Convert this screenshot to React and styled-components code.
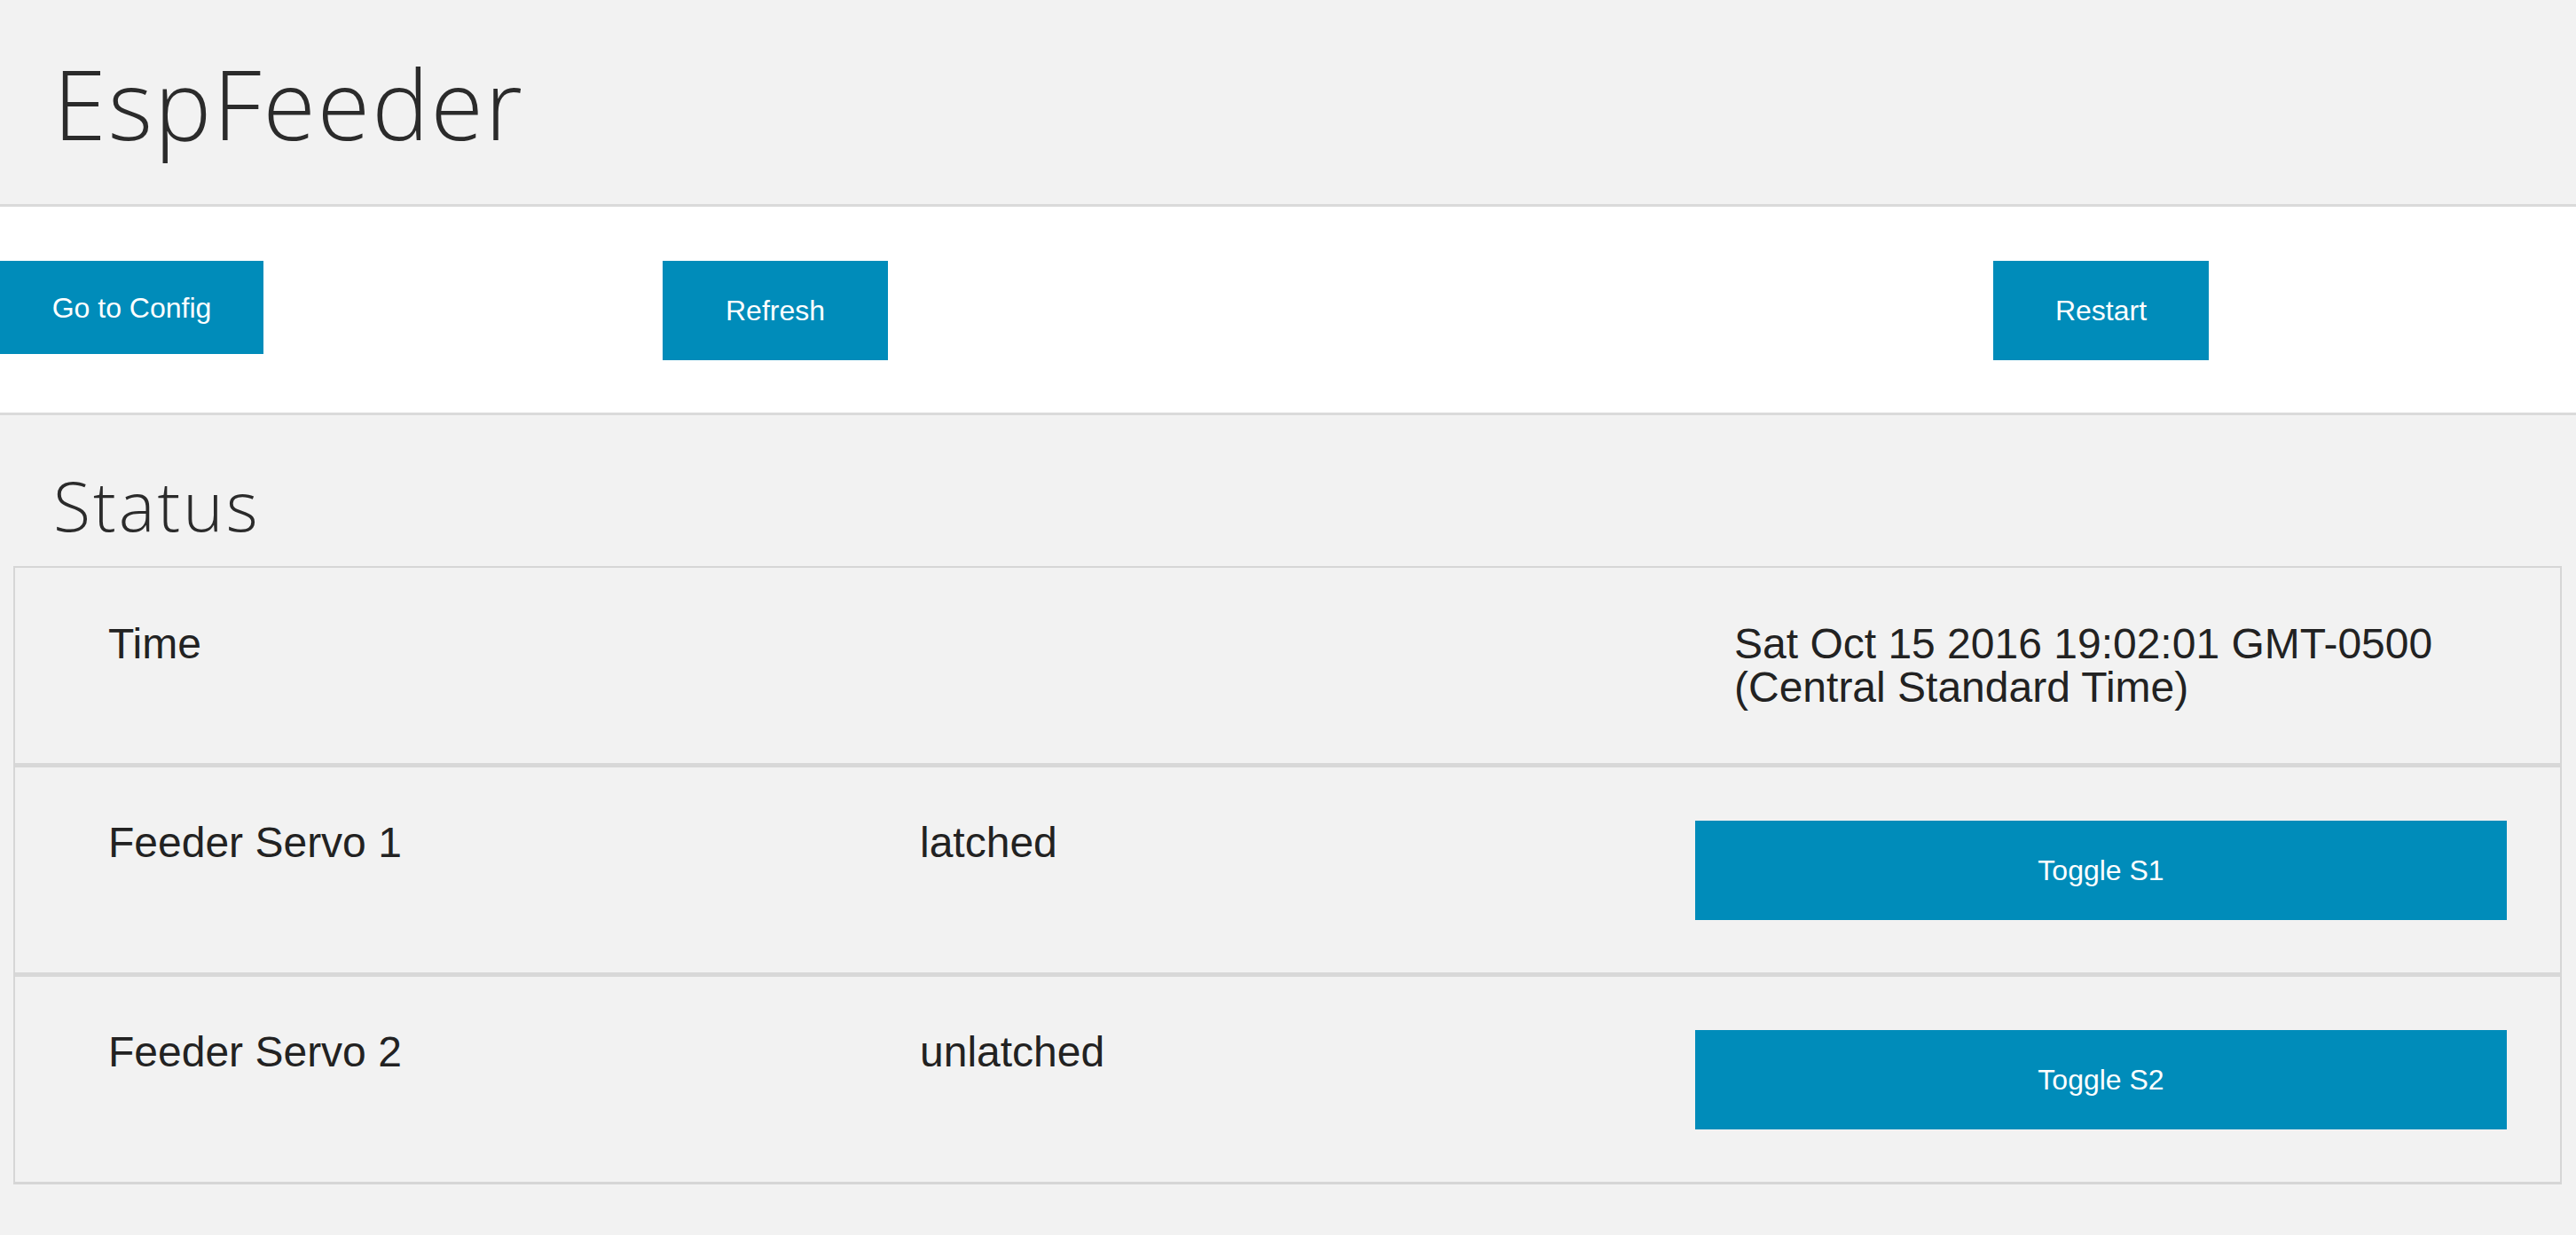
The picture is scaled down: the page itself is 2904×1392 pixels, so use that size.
import React from "react";
import styled, { createGlobalStyle } from "styled-components";

const GlobalStyle = createGlobalStyle`
  html, body {
    margin: 0;
    padding: 0;
    background: #f2f2f2;
  }
  body {
    font-family: "Liberation Sans", Arial, sans-serif;
    color: #222;
  }
  * { box-sizing: border-box; }
`;

const Page = styled.div`
  min-height: 1392px;
  background: #f2f2f2;
`;

const Header = styled.header`
  height: 233px;
  padding: 52px 0 0 60px;
  background: #f2f2f2;
  border-bottom: 3px solid #dadada;
`;

const Title = styled.h1`
  margin: 0;
  font-family: "Open Sans", "Liberation Sans", sans-serif;
  font-weight: 300;
  font-size: 108px;
  line-height: 1.2;
  letter-spacing: 2px;
  color: #2b2b2b;
`;

const Toolbar = styled.nav`
  display: flex;
  align-items: flex-start;
  height: 235px;
  padding-top: 61px;
  background: #ffffff;
  border-bottom: 3px solid #dadada;
`;

const Button = styled.button`
  display: flex;
  align-items: center;
  justify-content: center;
  flex: none;
  width: ${(p) => p.$w || "100%"};
  height: ${(p) => p.$h || "112px"};
  margin: 0 0 0 ${(p) => p.$offset || "0px"};
  padding: 0;
  border: none;
  border-radius: 0;
  background: #008cba;
  color: #ffffff;
  font-family: "Liberation Sans", Arial, sans-serif;
  font-size: 32px;
  line-height: 1;
  cursor: pointer;
`;

const Main = styled.main`
  padding: 56px 16px 0 15px;
`;

const SectionTitle = styled.h2`
  margin: 0 0 22px 45px;
  font-family: "Open Sans", "Liberation Sans", sans-serif;
  font-weight: 300;
  font-size: 77px;
  line-height: 1.2;
  letter-spacing: 3px;
  color: #2b2b2b;
`;

const Table = styled.div`
  border: 2px solid #d6d6d6;
  border-bottom-width: 3px;
`;

const Row = styled.div`
  display: grid;
  grid-template-columns: 915px 874px 1fr;
  align-items: start;
  padding: ${(p) => (p.$tall ? "61px 60px 61px 105px" : "60px 60px 59px 105px")};
  border-bottom: ${(p) => (p.$last ? "none" : "5px solid #d8d8d8")};
`;

const Cell = styled.div`
  font-size: 48px;
  line-height: 49px;
  color: #222;
  padding-left: ${(p) => p.$indent || "0px"};
`;

const rows = [
  { label: "Feeder Servo 1", state: "latched", action: "Toggle S1" },
  { label: "Feeder Servo 2", state: "unlatched", action: "Toggle S2" },
];

export default function App() {
  return (
    <Page>
      <GlobalStyle />
      <Header>
        <Title>EspFeeder</Title>
      </Header>
      <Toolbar>
        <Button $w="297px" $h="105px">Go to Config</Button>
        <Button $w="254px" $offset="450px">Refresh</Button>
        <Button $w="243px" $offset="1246px">Restart</Button>
      </Toolbar>
      <Main>
        <SectionTitle>Status</SectionTitle>
        <Table>
          <Row $tall>
            <Cell>Time</Cell>
            <Cell />
            <Cell $indent="44px">
              Sat Oct 15 2016 19:02:01 GMT-0500 (Central Standard Time)
            </Cell>
          </Row>
          {rows.map((r, i) => (
            <Row key={r.label} $last={i === rows.length - 1}>
              <Cell>{r.label}</Cell>
              <Cell>{r.state}</Cell>
              <Button>{r.action}</Button>
            </Row>
          ))}
        </Table>
      </Main>
    </Page>
  );
}
